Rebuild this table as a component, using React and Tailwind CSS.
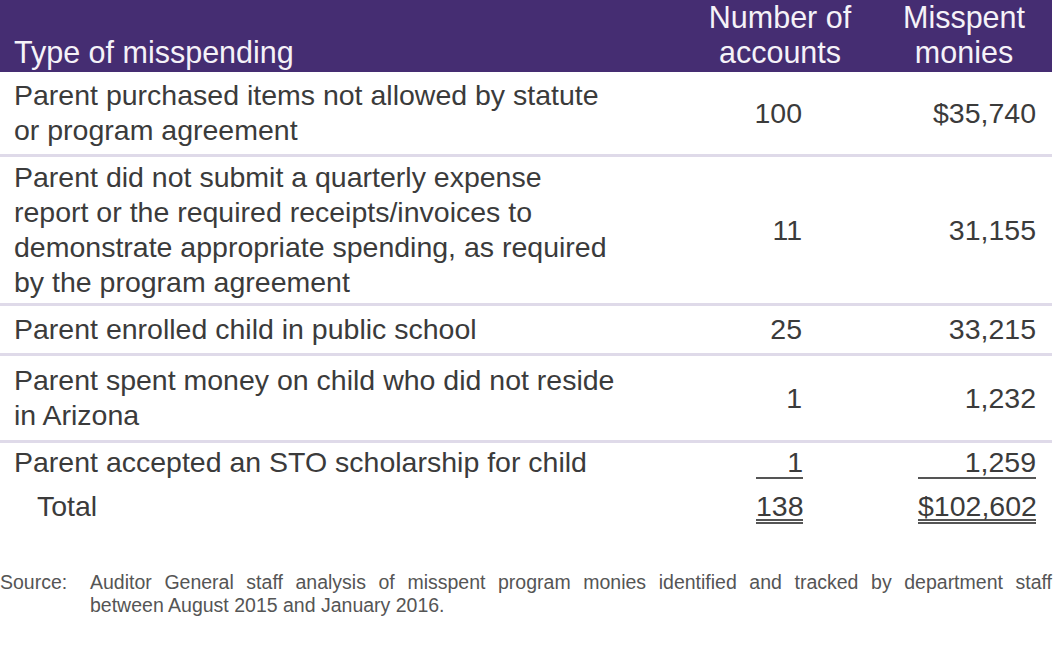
const rows = [
  {
    label: "Parent purchased items not allowed by statute\nor program agreement",
    count: "100",
    amount: "$35,740",
    pad: "py-[6px]",
  },
  {
    label:
      "Parent did not submit a quarterly expense\nreport or the required receipts/invoices to\ndemonstrate appropriate spending, as required\nby the program agreement",
    count: "11",
    amount: "31,155",
    pad: "py-[3px]",
  },
  {
    label: "Parent enrolled child in public school",
    count: "25",
    amount: "33,215",
    pad: "py-[6px]",
  },
  {
    label: "Parent spent money on child who did not reside\nin Arizona",
    count: "1",
    amount: "1,232",
    pad: "py-[7px]",
  },
];

const Separator = () => <div className="h-[3px] w-full bg-[#dfdae9]"></div>;

const App = () => {
  return (
    <div
      className="w-[1064px] h-[668px] bg-white text-[#3b3b3b] overflow-hidden"
      style={{ fontFamily: '"Liberation Sans", Arial, sans-serif' }}
    >
      <div className="w-[1052px]">
        {/* header */}
        <div className="grid grid-cols-[700px_160px_192px] h-[72px] bg-[#452d72] text-[#f5f2f8] text-[30.5px] leading-[35px]">
          <div className="flex items-end pl-[14px] pb-[2px]">Type of misspending</div>
          <div className="text-center pb-[2px]">
            Number of
            <br />
            accounts
          </div>
          <div className="text-center pl-[16px] pb-[2px]">
            Misspent
            <br />
            monies
          </div>
        </div>

        {rows.map((row) => (
          <div key={row.count + row.amount}>
            <div
              className={`grid grid-cols-[700px_160px_192px] items-center text-[28.5px] leading-[35px] ${row.pad}`}
            >
              <div className="pl-[14px] whitespace-pre-line">{row.label}</div>
              <div className="text-right pr-[58px]">{row.count}</div>
              <div className="text-right pr-[16px]">{row.amount}</div>
            </div>
            <Separator />
          </div>
        ))}

        {/* last row + total */}
        <div className="grid grid-cols-[700px_160px_192px] items-start text-[28.5px] leading-[30px] pt-[4px]">
          <div className="pl-[14px]">Parent accepted an STO scholarship for child</div>
          <div className="pr-[57px]">
            <div className="ml-auto w-[47px] text-right border-b-2 border-[#555]">1</div>
          </div>
          <div className="pr-[16px]">
            <div className="ml-auto w-[118px] text-right border-b-2 border-[#555]">1,259</div>
          </div>
        </div>
        <div className="grid grid-cols-[700px_160px_192px] items-start text-[28.5px] leading-[26px] pt-[14px]">
          <div className="pl-[37px]">Total</div>
          <div className="pr-[57px]">
            <div className="ml-auto w-[47px] text-right border-b-[5px] border-double border-[#555]">138</div>
          </div>
          <div className="pr-[16px]">
            <div className="ml-auto w-[118px] text-right border-b-[5px] border-double border-[#555]">$102,602</div>
          </div>
        </div>
      </div>

      {/* source note */}
      <div className="flex mt-[47px] text-[19.5px] leading-[23px] text-[#555]">
        <div className="w-[90px] shrink-0">Source:</div>
        <div className="w-[962px]">
          <div className="text-justify [text-align-last:justify]">
            Auditor General staff analysis of misspent program monies identified and tracked by department staff
          </div>
          <div>between August 2015 and January 2016.</div>
        </div>
      </div>
    </div>
  );
};

export default App;
